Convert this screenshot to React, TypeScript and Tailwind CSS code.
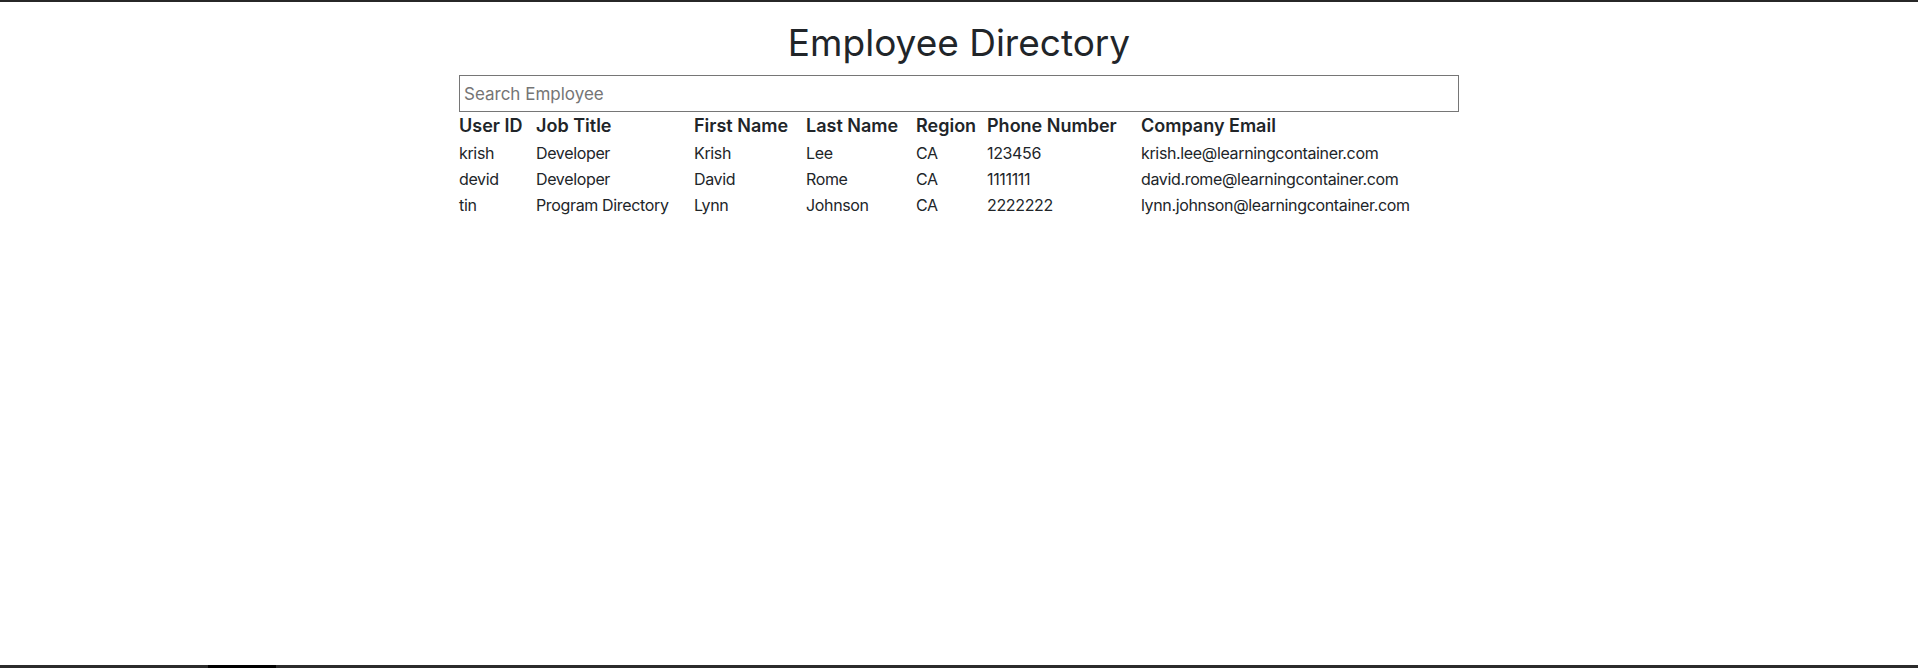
import { useState } from "react";

type Employee = {
  id: string;
  title: string;
  first: string;
  last: string;
  region: string;
  phone: string;
  email: string;
};

const employees: Employee[] = [
  { id: "krish", title: "Developer", first: "Krish", last: "Lee", region: "CA", phone: "123456", email: "krish.lee@learningcontainer.com" },
  { id: "devid", title: "Developer", first: "David", last: "Rome", region: "CA", phone: "1111111", email: "david.rome@learningcontainer.com" },
  { id: "tin", title: "Program Directory", first: "Lynn", last: "Johnson", region: "CA", phone: "2222222", email: "lynn.johnson@learningcontainer.com" },
];

const App = () => {
  const [search, setSearch] = useState("");

  const rows = employees.filter((e) =>
    Object.values(e).join(" ").toLowerCase().includes(search.toLowerCase())
  );

  return (
    <div className="min-h-screen flex flex-col bg-white text-[#212529] font-['Inter','Liberation_Sans',sans-serif]">
      <div className="h-[2px] bg-[#272727]" />

      <div className="flex-1 w-[1000px] mx-auto">
        <h1 className="mt-[19px] mb-[10px] text-center text-[37px] leading-[44px] font-normal">
          Employee Directory
        </h1>

        <input
          type="text"
          value={search}
          onChange={(e) => setSearch(e.target.value)}
          placeholder="Search Employee"
          className="block w-full h-[37px] border border-[#767676] px-[4px] text-[17px] placeholder:text-[#757575] focus:outline-none"
        />

        <table className="table-fixed w-full text-left">
          <thead>
            <tr className="text-[18px] leading-[28px]">
              <th className="w-[77px] font-semibold">User ID</th>
              <th className="w-[158px] font-semibold">Job Title</th>
              <th className="w-[112px] font-semibold">First Name</th>
              <th className="w-[110px] font-semibold">Last Name</th>
              <th className="w-[71px] font-semibold">Region</th>
              <th className="w-[154px] font-semibold">Phone Number</th>
              <th className="font-semibold">Company Email</th>
            </tr>
          </thead>
          <tbody className="text-[16px] leading-[26px] tracking-[-0.35px]">
            {rows.map((e) => (
              <tr key={e.id}>
                <td>{e.id}</td>
                <td>{e.title}</td>
                <td>{e.first}</td>
                <td>{e.last}</td>
                <td>{e.region}</td>
                <td>{e.phone}</td>
                <td>{e.email}</td>
              </tr>
            ))}
          </tbody>
        </table>
      </div>

      <div className="h-[3px] flex bg-[#2b2b2b]">
        <div className="w-[208px]" />
        <div className="w-[68px] bg-black" />
      </div>
    </div>
  );
};

export default App;
